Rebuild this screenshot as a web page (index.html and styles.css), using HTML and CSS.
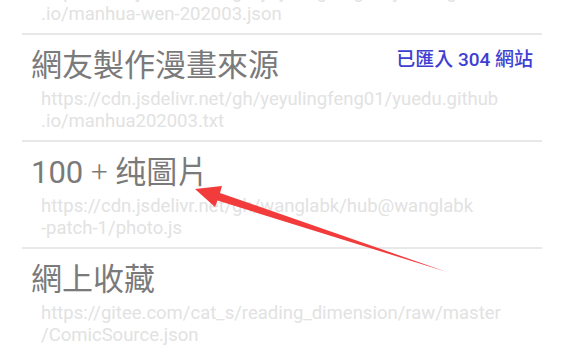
FILE: index.html
```html
<!DOCTYPE html>
<html>
<head>
<meta charset="utf-8">
<link rel="stylesheet" href="styles.css">
</head>
<body>
<div class="list">
  <div class="item">
    <div class="head"><span class="title">網友製作漫畫</span></div>
    <div class="url">https://cdn.jsdelivr.net/gh/yeyulingfeng01/yuedu.github<br>.io/manhua-wen-202003.json</div>
  </div>
  <div class="item">
    <div class="head"><span class="title">網友製作漫畫來源</span><span class="badge">已匯入 304 網站</span></div>
    <div class="url">https://cdn.jsdelivr.net/gh/yeyulingfeng01/yuedu.github<br>.io/manhua202003.txt</div>
  </div>
  <div class="item">
    <div class="head"><span class="title">100 <span class="plus">+</span> 纯圖片</span></div>
    <div class="url">https://cdn.jsdelivr.net/gh/wanglabk/hub@wanglabk<br>-patch-1/photo.js</div>
  </div>
  <div class="item">
    <div class="head"><span class="title">網上收藏</span></div>
    <div class="url">https://gitee.com/cat_s/reading_dimension/raw/master<br>/ComicSource.json</div>
  </div>
</div>
<svg class="arrow" width="574" height="349" viewBox="0 0 574 349">
  <polygon points="195,189 222,186 220,193 447,272 217.5,200.6 215,207" fill="#f23b3b"/>
</svg>
</body>
</html>
```
FILE: styles.css
```css
html, body {
  margin: 0;
  padding: 0;
  background: #ffffff;
  overflow: hidden;
  width: 574px;
  height: 349px;
}
body {
  position: relative;
  font-family: Roboto, "Noto Sans CJK TC", sans-serif;
}
.list {
  margin-top: -72px;
  padding: 0 32px 0 22px;
}
.item {
  border-bottom: 2px solid #e8e8e8;
  padding: 13px 0 8px 0;
}
.head {
  display: flex;
  justify-content: space-between;
  align-items: flex-start;
  padding: 0 9px 0 9px;
  margin-bottom: 4px;
}
.title {
  font-size: 31px;
  line-height: 36px;
  height: 36px;
  color: #7a7a7a;
}
.plus {
  font-family: "Noto Sans CJK TC", sans-serif;
  font-weight: 300;
  line-height: 0;
}
.badge {
  font-size: 19px;
  line-height: 24px;
  font-weight: 500;
  color: #3e3ed2;
}
.url {
  padding-left: 19px;
  font-size: 18.5px;
  line-height: 22px;
  color: #e2e2e2;
  white-space: nowrap;
}
.arrow {
  position: absolute;
  left: 0;
  top: 0;
}
```
